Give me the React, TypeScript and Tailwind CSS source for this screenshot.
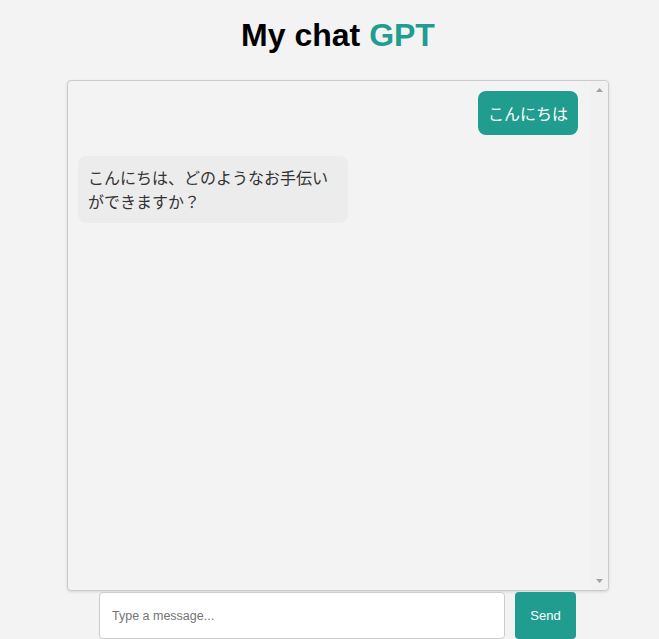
import React, { useState } from 'react';

type Message = { role: 'user' | 'assistant'; text: string };

const initialMessages: Message[] = [
  { role: 'user', text: 'こんにちは' },
  { role: 'assistant', text: 'こんにちは、どのようなお手伝いができますか？' },
];

const App: React.FC = () => {
  const [messages] = useState<Message[]>(initialMessages);
  const [input, setInput] = useState('');

  return (
    <div className="min-h-[639px] w-full bg-[#f3f3f3] pl-[17px] font-['Liberation_Sans',Arial,'Noto_Sans_CJK_JP',sans-serif]">
      <div className="flex flex-col items-center">
        <h1 className="mt-[17px] text-[32px] font-bold leading-[37px] text-black">
          My chat <span className="text-[#219d8f]">GPT</span>
        </h1>

        <div className="mt-[26px] flex h-[511px] w-[542px] rounded-[4px] border border-[#cbcbcb] bg-[#f3f3f3] shadow-[0_1px_3px_rgba(0,0,0,0.12)]">
          <div className="flex flex-1 flex-col gap-[21px] py-[10px] pl-[10px] pr-[13px] font-['Noto_Sans_CJK_JP','Liberation_Sans',sans-serif] text-[16px] leading-[24px]">
            {messages.map((m, i) =>
              m.role === 'user' ? (
                <div key={i} className="flex justify-end">
                  <div className="rounded-[8px] bg-[#219d8f] px-[10px] py-[10px] text-white">{m.text}</div>
                </div>
              ) : (
                <div key={i} className="flex justify-start">
                  <div className="w-[270px] rounded-[8px] bg-[#ececec] px-[10px] pt-[9px] pb-[10px] text-[#333]">{m.text}</div>
                </div>
              )
            )}
          </div>
          <div className="flex w-[17px] flex-col items-center justify-between rounded-r-[4px] bg-[#f1f1f1] py-[7px]">
            <svg width="7" height="4" viewBox="0 0 7 4"><path d="M3.5 0 L7 4 L0 4 Z" fill="#a3a3a3" /></svg>
            <svg width="7" height="4" viewBox="0 0 7 4"><path d="M0 0 L7 0 L3.5 4 Z" fill="#a3a3a3" /></svg>
          </div>
        </div>

        <div className="mt-[1px] flex w-[478px] gap-[10px] pr-[1px]">
          <input
            value={input}
            onChange={(e) => setInput(e.target.value)}
            placeholder="Type a message..."
            className="h-[47px] flex-1 rounded-[4px] border border-[#cccccc] bg-white px-[12px] text-[12.5px] text-[#333] outline-none placeholder:text-[#757575]"
          />
          <button className="h-[47px] w-[61px] rounded-[4px] bg-[#219d8f] text-[13px] text-white">Send</button>
        </div>
      </div>
    </div>
  );
};

export default App;
